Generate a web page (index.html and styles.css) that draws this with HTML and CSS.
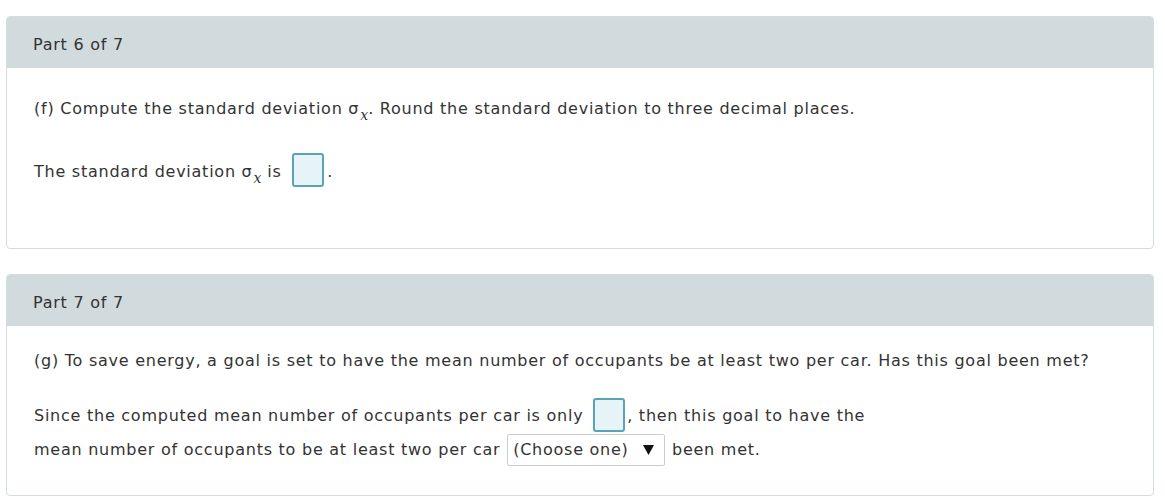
FILE: index.html
```html
<!DOCTYPE html>
<html>
<head>
<meta charset="utf-8">
<link rel="stylesheet" href="styles.css">
</head>
<body>
<div class="page">
  <section class="card card-f">
    <div class="card-head">Part 6 of 7</div>
    <div class="card-body">
      <p class="q">(f) Compute the standard deviation <span class="sig">σ<sub class="sx">x</sub></span>. Round the standard deviation to three decimal places.</p>
      <p class="a a-f">The standard deviation <span class="sig">σ<sub class="sx">x</sub></span> is <span class="box box-f"></span>.</p>
    </div>
  </section>
  <section class="card card-g">
    <div class="card-head">Part 7 of 7</div>
    <div class="card-body">
      <p class="q">(g) To save energy, a goal is set to have the mean number of occupants be at least two per car. Has this goal been met?</p>
      <p class="a a-g1">Since the computed mean number of occupants per car is only <span class="box"></span>, then this goal to have the</p>
      <p class="a a-g2">mean number of occupants to be at least two per car <span class="select">(Choose one)<svg class="arrow" width="11" height="10" viewBox="0 0 11 10"><path d="M0 0H11L5.5 10Z" fill="#111"/></svg></span> been met.</p>
    </div>
  </section>
</div>
</body>
</html>
```
FILE: styles.css
```css
html, body {
  margin: 0;
  padding: 0;
  background: #ffffff;
}
body {
  font-family: "DejaVu Sans", Verdana, sans-serif;
  font-size: 16px;
  letter-spacing: 0.75px;
  color: #333333;
}
.page {
  padding: 16px 11px 0 6px;
  display: flex;
  flex-direction: column;
  gap: 25px;
}
.card {
  border: 1px solid #d3dcdf;
  border-radius: 4px;
  overflow: hidden;
  background: #fff;
}
.card-head {
  background: #d1dadd;
  height: 51px;
  box-sizing: border-box;
  display: flex;
  align-items: center;
  padding: 3px 0 0 26px;
  color: #333;
}
.card-body {
  padding: 0 27px;
}
.card-f .card-body { height: 180px; }
.card-g .card-body { height: 169px; }
p {
  margin: 0;
  line-height: 34px;
  white-space: nowrap;
}
.card-f .q { padding-top: 24px; }
.a-f { margin-top: 29px; }
.card-g .q { padding-top: 18px; }
.a-g1 { margin-top: 21px; }
.a-g2 { margin-top: 0; }
.sx {
  font-family: "DejaVu Serif", "Liberation Serif", serif;
  font-style: italic;
  font-size: 14px;
  vertical-align: -6px;
  line-height: 0;
  margin-left: 1px;
  letter-spacing: 0;
}
.box {
  display: inline-block;
  width: 28px;
  height: 30px;
  border: 2px solid #5aa3b5;
  border-radius: 3px;
  background: #e6f4f8;
  vertical-align: middle;
  margin: -4px 2px 0 4px;
}
.box-f {
  margin: -6px 3px 0 5px;
}
.select {
  display: inline-flex;
  align-items: center;
  box-sizing: border-box;
  width: 158px;
  height: 32px;
  border: 1px solid #cccccc;
  border-radius: 2px;
  padding: 0 0 0 5px;
  line-height: 22px;
  color: #333;
  margin: -2px 1px 0 1px;
  vertical-align: middle;
}
.arrow {
  margin-left: 14px;
  margin-top: 1px;
}
```
